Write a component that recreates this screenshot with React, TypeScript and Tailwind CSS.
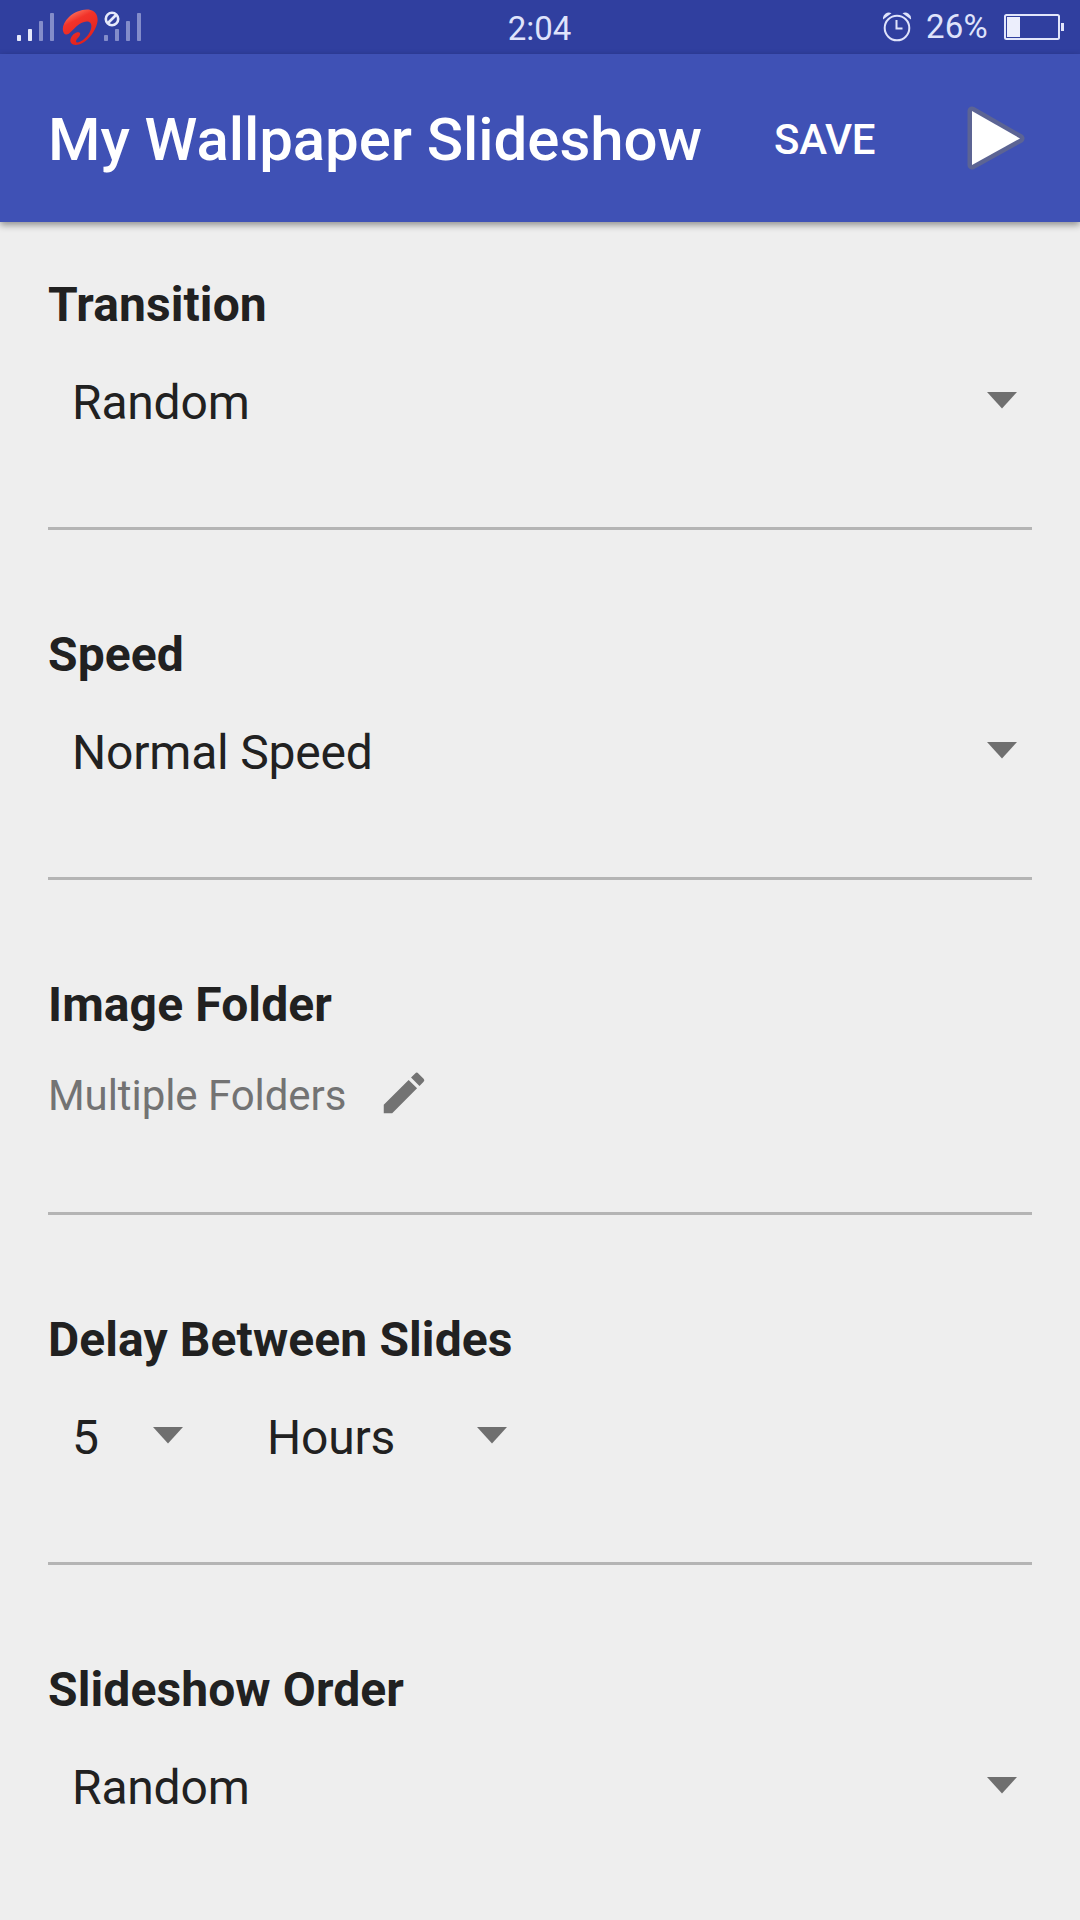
import { ReactNode } from "react";

const bars = [
  { x: 0, h: 6 },
  { x: 11, h: 12 },
  { x: 22, h: 20 },
  { x: 33, h: 28 },
];

function Signal({ strength }: { strength: number }) {
  return (
    <svg width="37" height="28" viewBox="0 0 37 28">
      {bars.map((b, i) => (
        <rect key={b.x} x={b.x} y={28 - b.h} width="4" height={b.h} rx="0.8" fill={i < strength ? "#e6e9fb" : "#838cca"} />
      ))}
    </svg>
  );
}

function CarrierLogo() {
  return (
    <svg width="38" height="38" viewBox="0 0 38 38">
      <defs>
        <linearGradient id="carrier" x1="0.1" y1="0" x2="0.6" y2="1">
          <stop offset="0" stopColor="#ff8f74" />
          <stop offset="0.35" stopColor="#f2332a" />
          <stop offset="1" stopColor="#e0201c" />
        </linearGradient>
      </defs>
      <path
        fill="url(#carrier)"
        d="M1.800 25C-0.500 21.500 1 14.500 7 9C13 3.500 22 0.500 28.500 2C34 3.500 36.500 8.500 35.300 14.500C33.500 23 27 31.500 20 35.300C15 37.800 10 37.500 8.500 34C7.500 30.500 11 25 15.300 24.200C18.500 23.800 19 26 17 28.800C15.200 31 13 32.800 14.500 34.200C17 35.500 22.500 31.500 26 27C29.200 22.500 30.500 17.500 28.300 14.800C26 12.500 21.500 13.500 17.500 16C13.500 18.500 10 23.500 6.800 25.700C4.800 27 2.800 26.600 1.800 25Z"
      />
    </svg>
  );
}

function StatusBar() {
  return (
    <div className="flex h-[54px] items-start justify-between bg-[#303f9f] text-[#dfe3fb]">
      <div className="flex w-[300px] pl-[17px]">
        <div className="pt-[13px]">
          <Signal strength={2} />
        </div>
        <div className="pt-[8px] pl-[8px]">
          <CarrierLogo />
        </div>
        <div className="relative pt-[13px] pl-[4px]">
          <Signal strength={0} />
          <svg className="absolute top-[10px] left-[3px]" width="18" height="18" viewBox="0 0 18 18" fill="#303f9f">
            <circle cx="9" cy="9" r="8" />
            <g stroke="#e6e9fb" strokeWidth="2.600">
              <circle cx="9" cy="9" r="6.200" />
              <path d="M13 5 5 13" />
            </g>
          </svg>
        </div>
      </div>
      <span className="pr-[1px] text-[33px] leading-[58px]">2:04</span>
      <div className="flex w-[300px] justify-end pr-[15px]">
        <svg className="mt-[12px]" width="30" height="30" viewBox="0 0 30 30" fill="none" stroke="#dfe3fb" strokeWidth="2">
          <circle cx="14" cy="16" r="12.300" />
          <path d="M13.500 8v8.500h6" />
          <path d="M0 7.500A6 6 0 0 1 8.500 1.200ZM28 7.500A6 6 0 0 0 19.500 1.200Z" fill="#dfe3fb" stroke="none" />
        </svg>
        <span className="ml-[13px] w-[65px] text-[33px] leading-[54px] tracking-[0.2px]">26%</span>
        <svg className="mt-[13px] ml-[13px]" width="61" height="28" viewBox="0 0 61 28">
          <rect x="1" y="2" width="54" height="24" rx="1.500" fill="none" stroke="#e2e6fb" strokeWidth="2" />
          <rect x="3" y="4" width="13" height="20" fill="#eceefc" />
          <rect x="57" y="10" width="3" height="8" fill="#e2e6fb" />
        </svg>
      </div>
    </div>
  );
}

function AppBar() {
  return (
    <header className="flex h-[168px] items-center bg-[#3f51b5] pl-[48px] font-medium text-white shadow-[0_3px_7px_rgba(0,0,0,0.4)]">
      <h1 className="w-[726px] pt-[4px] text-[60px] leading-[70px] tracking-[-0.06px] whitespace-nowrap">My Wallpaper Slideshow</h1>
      <button className="w-[193px] pt-[4px] text-left text-[42px] leading-[50px] tracking-[-0.3px]">SAVE</button>
      <svg width="62" height="68" viewBox="0 0 62 68">
        <path d="M5 7 53 34.500 5 61Z" fill="#5c6494" stroke="#5c6494" strokeWidth="9" strokeLinejoin="round" />
        <path d="M5 7 53 34.500 5 61Z" fill="#fff" />
      </svg>
    </header>
  );
}

function Caret() {
  return (
    <svg width="30" height="17" viewBox="0 0 30 17">
      <path d="M0 0h30L15 16.500Z" fill="#6f6f6f" />
    </svg>
  );
}

function Section({ title, children }: { title: string; children: ReactNode }) {
  return (
    <section className="border-b-[3px] border-[#b4b4b4] pt-[97px] first:pt-[55px] last:border-0">
      <h2 className="text-[48px] leading-[56px] font-bold tracking-[0.1px]">{title}</h2>
      {children}
    </section>
  );
}

function Select({ value, className }: { value: string; className: string }) {
  return (
    <div className={`flex items-center justify-between pl-[24px] text-[48px] leading-[56px] tracking-[-0.2px] ${className}`}>
      <span>{value}</span>
      <div className="-mt-[6px]">
        <Caret />
      </div>
    </div>
  );
}

export default function App() {
  return (
    <div className="h-[1920px] w-[1080px] overflow-hidden bg-[#eeeeee] font-['Roboto',sans-serif] text-[#212121]">
      <StatusBar />
      <AppBar />
      <main className="px-[48px]">
        <Section title="Transition">
          <Select value="Random" className="mt-[42px] mb-[96px] pr-[15px]" />
        </Section>
        <Section title="Speed">
          <Select value="Normal Speed" className="mt-[42px] mb-[96px] pr-[15px]" />
        </Section>
        <Section title="Image Folder">
          <div className="mt-[33px] mb-[92px] flex h-[54px] items-center text-[#737373]">
            <span className="w-[329px] pt-[6px] text-[42px] leading-[50px] tracking-[-0.06px]">Multiple Folders</span>
            <svg width="54" height="54" viewBox="0 0 24 24" fill="currentColor">
              <path d="M3 17.250V21h3.750L17.810 9.940l-3.750-3.750L3 17.250zM20.710 7.040a1 1 0 0 0 0-1.410l-2.340-2.340a1 1 0 0 0-1.410 0l-1.830 1.830 3.750 3.750 1.830-1.830z" />
            </svg>
          </div>
        </Section>
        <Section title="Delay Between Slides">
          <div className="mt-[42px] mb-[96px] flex">
            <Select value="5" className="w-[135px]" />
            <Select value="Hours" className="ml-[60px] w-[264px]" />
          </div>
        </Section>
        <Section title="Slideshow Order">
          <Select value="Random" className="mt-[42px] pr-[15px]" />
        </Section>
      </main>
    </div>
  );
}
